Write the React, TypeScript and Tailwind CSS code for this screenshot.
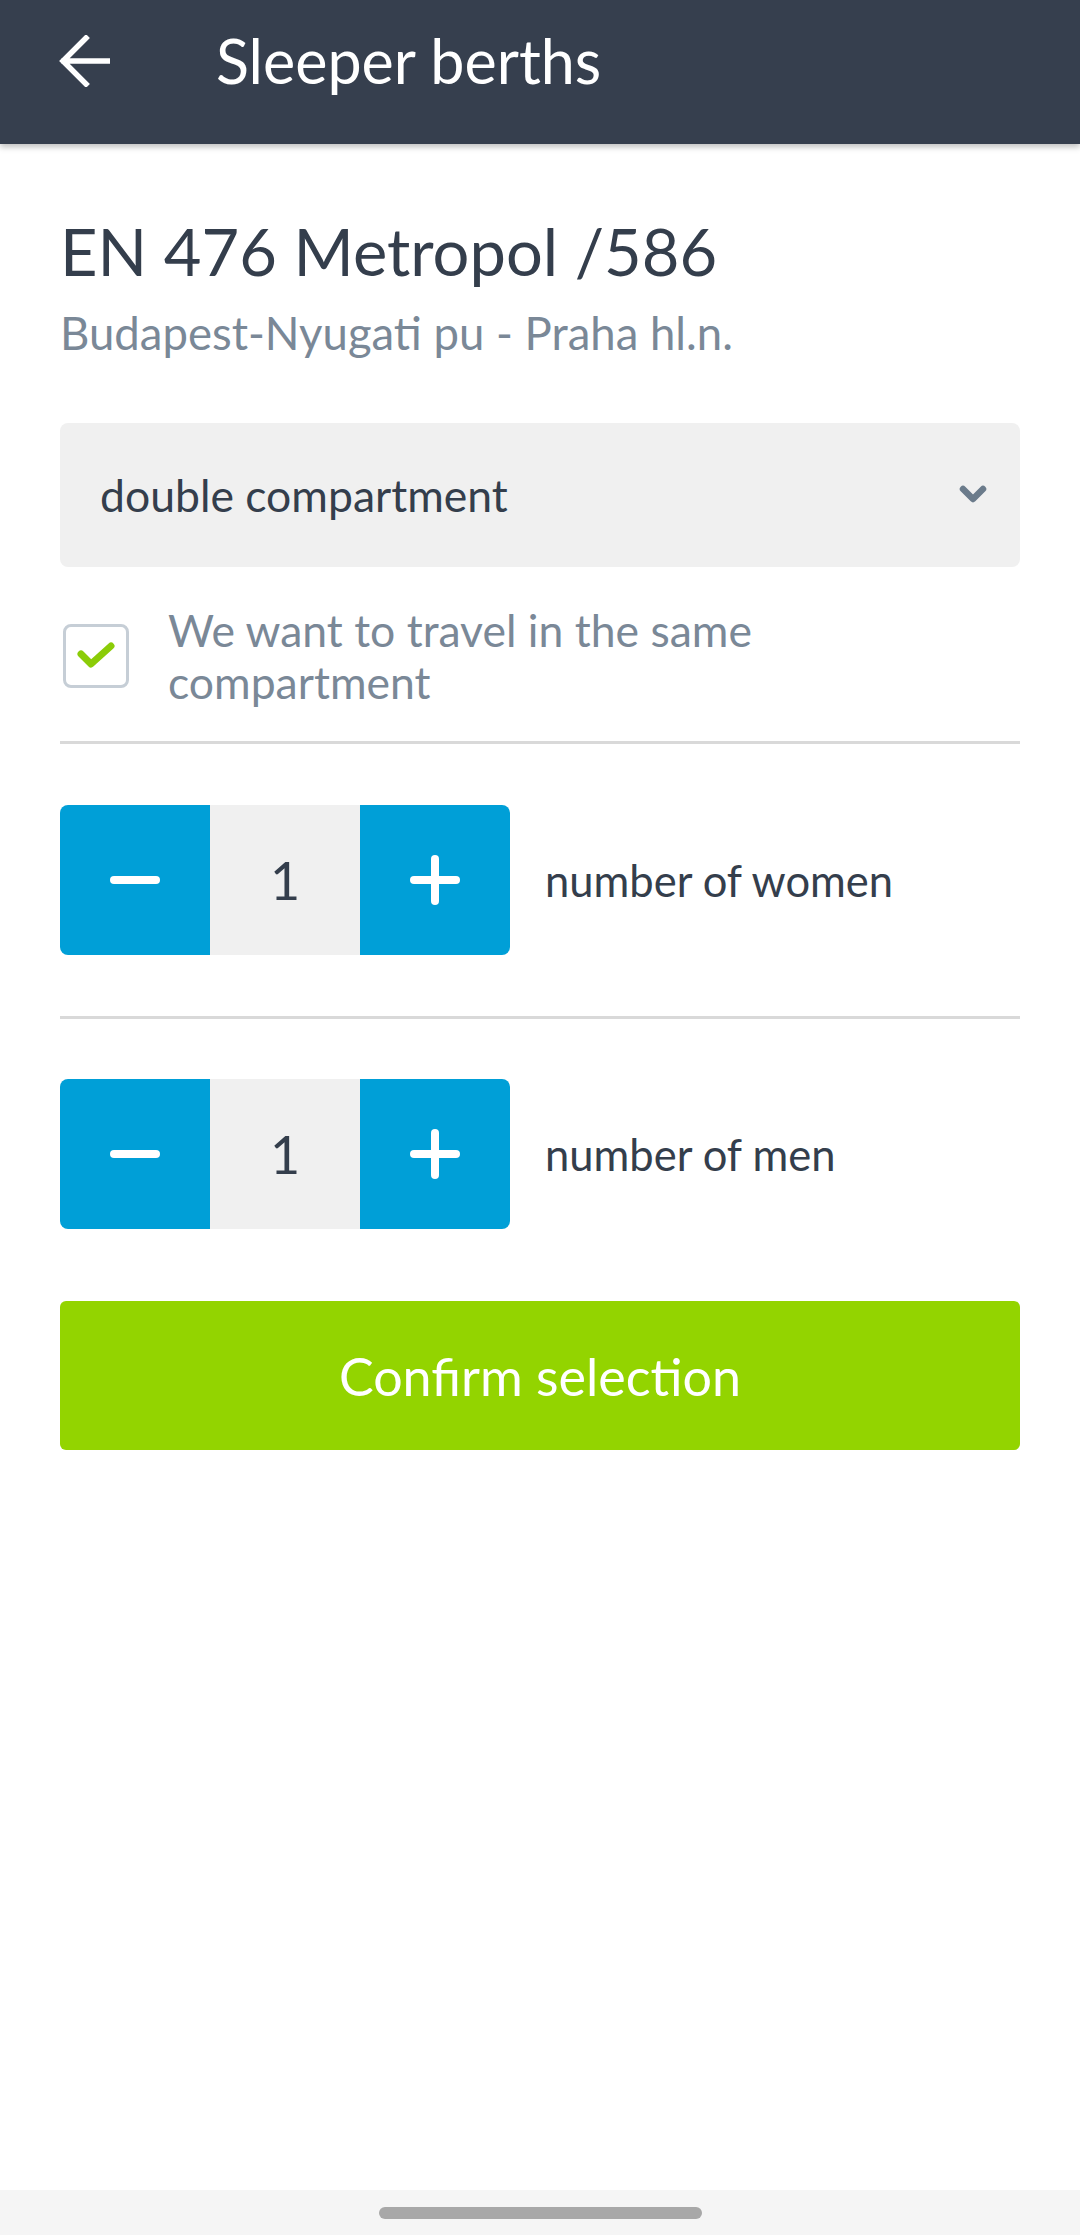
import { useState } from "react"

function Stepper({ value, label }: { value: number; label: string }) {
  return (
    <div className="flex items-center">
      <div className="flex h-[150px] w-[450px] overflow-hidden rounded-[8px]">
        <button className="flex w-[150px] items-center justify-center bg-[#009fd7]">
          <span className="block h-[8px] w-[50px] rounded-full bg-white" />
        </button>
        <div className="flex w-[150px] items-center justify-center bg-[#f0f0f0] text-[52px] text-[#343e4c]">
          {value}
        </div>
        <button className="relative flex w-[150px] items-center justify-center bg-[#009fd7]">
          <span className="block h-[8px] w-[50px] rounded-full bg-white" />
          <span className="absolute h-[50px] w-[8px] rounded-full bg-white" />
        </button>
      </div>
      <span className="ml-[35px] text-[43.5px] leading-[52px] text-[#343e4c]">{label}</span>
    </div>
  )
}

export default function App() {
  const [same, setSame] = useState(true)

  return (
    <div className="relative flex h-[2235px] w-[1080px] flex-col bg-white font-['Lato','Noto_Sans',sans-serif]">
      {/* toolbar */}
      <header className="z-10 flex h-[144px] items-center bg-[#363f4e] pb-[22px] shadow-[0_3px_6px_rgba(0,0,0,0.25)]">
        <svg className="ml-[58px] h-[52px] w-[52px]" viewBox="0 0 52 52" fill="none">
          <path d="M50 26H6M28 3L5 26L28 49" stroke="white" strokeWidth="5.5" strokeLinecap="square" />
        </svg>
        <h1 className="ml-[106px] text-[61px] leading-[64px] text-white">Sleeper berths</h1>
      </header>

      <main className="flex flex-1 flex-col px-[60px] pt-[71px]">
        <h2 className="text-[65px] leading-[72px] text-[#343e4c]">EN 476 Metropol /586</h2>
        <p className="mt-[20px] text-[45.5px] leading-[52px] text-[#7a8897]">Budapest-Nyugati pu - Praha hl.n.</p>

        <div className="mt-[64px] flex h-[144px] items-center justify-between rounded-[8px] bg-[#f0f0f0] pl-[40px] pr-[33px]">
          <span className="text-[44.5px] text-[#343e4c]">double compartment</span>
          <svg className="h-[20px] w-[28px]" viewBox="0 0 28 20" fill="none">
            <path d="M4 4L14 14L24 4" stroke="#6b7b8b" strokeWidth="6.5" strokeLinecap="round" strokeLinejoin="round" />
          </svg>
        </div>

        <div className="mt-[37px] flex items-center" onClick={() => setSame(!same)}>
          <div className="ml-[3px] flex h-[64px] w-[66px] shrink-0 items-center justify-center rounded-[8px] border-[3px] border-[#c6ced6]">
            {same && (
              <svg className="h-[28px] w-[38px]" viewBox="0 0 38 28" fill="none">
                <path d="M4 12L14 22L34 4" stroke="#8bcc08" strokeWidth="7" strokeLinecap="round" strokeLinejoin="round" />
              </svg>
            )}
          </div>
          <p className="ml-[39px] text-[44.5px] leading-[52px] text-[#7a8897]">
            We want to travel in the same
            <br />
            compartment
          </p>
        </div>

        <div className="mt-[33px] h-[3px] bg-[#d9d9d9]" />

        <div className="mt-[61px]">
          <Stepper value={1} label="number of women" />
        </div>

        <div className="mt-[61px] h-[3px] bg-[#d9d9d9]" />

        <div className="mt-[60px]">
          <Stepper value={1} label="number of men" />
        </div>

        <button className="mt-[72px] flex h-[149px] items-center justify-center rounded-[6px] bg-[#93d400] text-[52px] text-white">
          Confirm selection
        </button>
      </main>

      {/* gesture bar */}
      <div className="flex h-[45px] items-start justify-center bg-[#f5f5f5] pt-[17px]">
        <div className="h-[12px] w-[323px] rounded-full bg-[#a8a8a8]" />
      </div>
    </div>
  )
}
